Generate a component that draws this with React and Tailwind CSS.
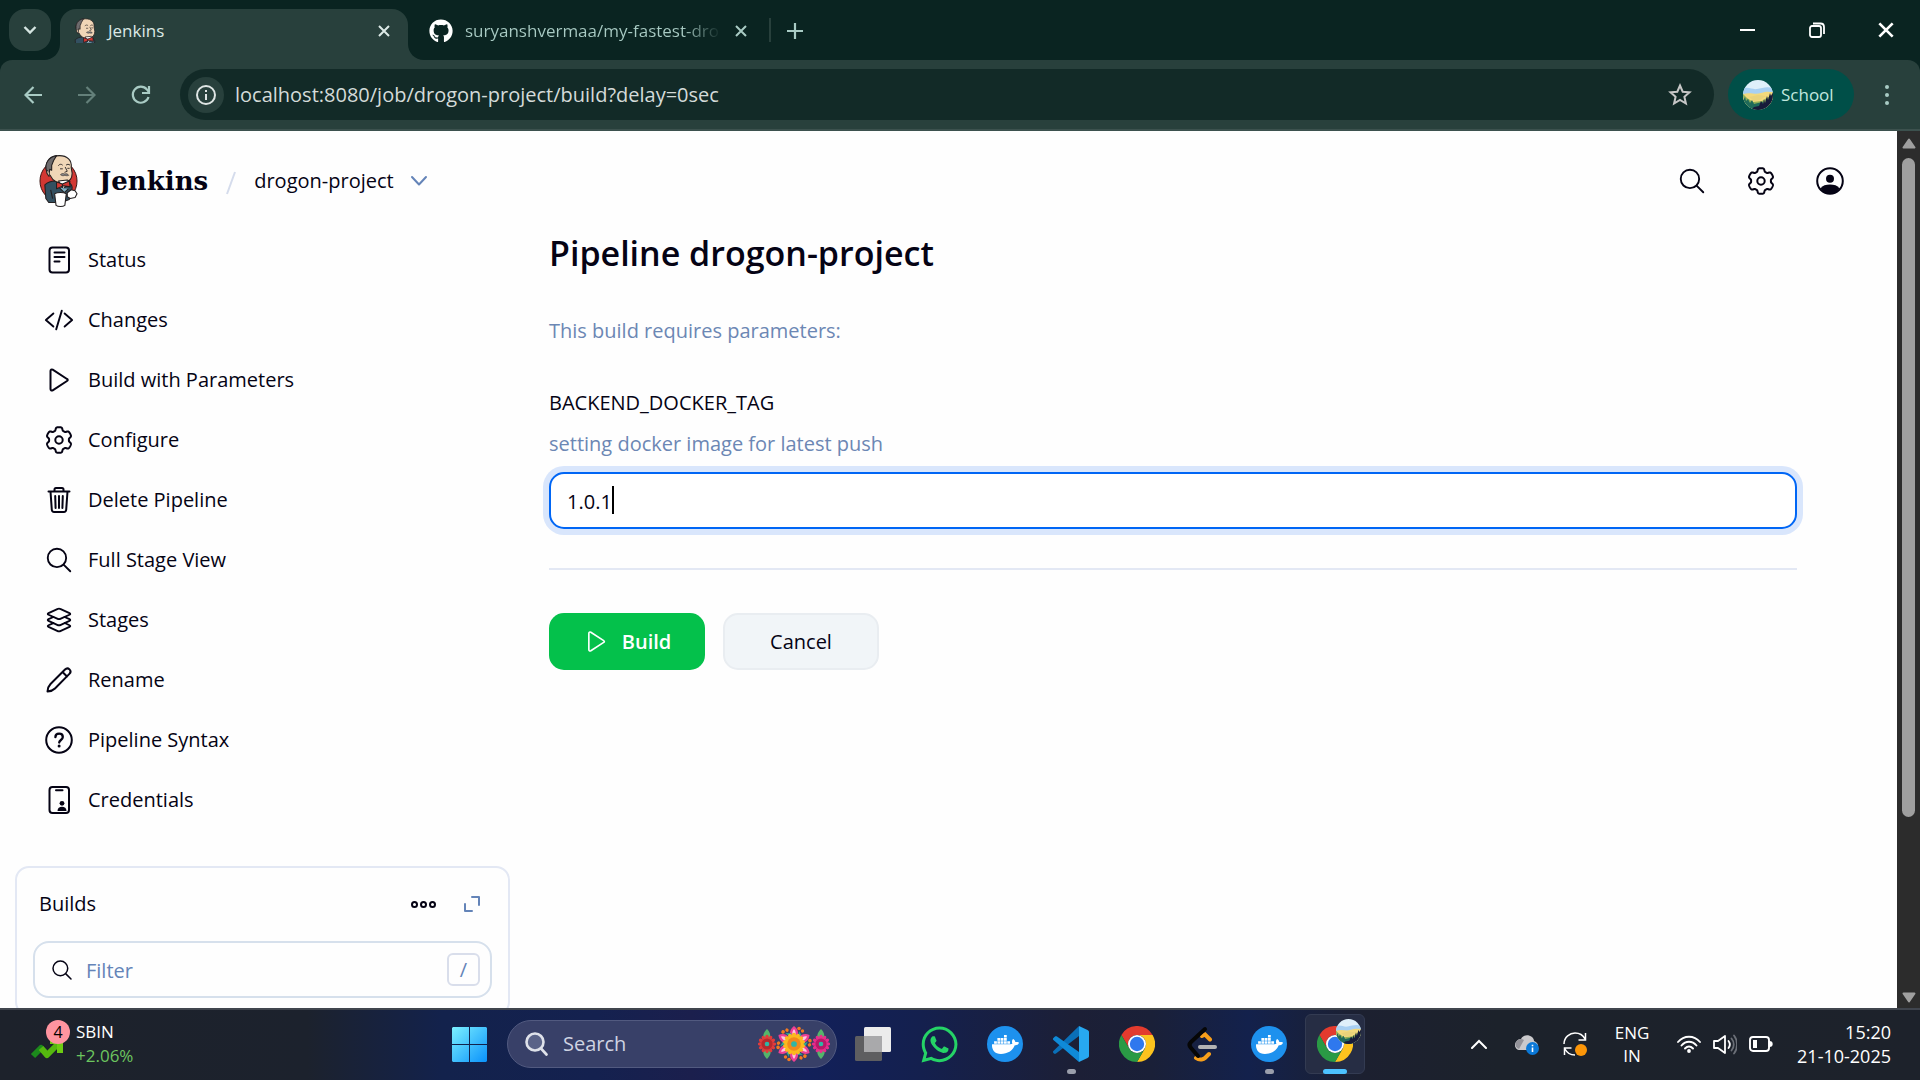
import React, { useState } from "react";
import { FaGithub, FaWhatsapp, FaDocker } from "react-icons/fa";
import { IoCodeSlashOutline, IoLayersOutline, IoSearchOutline } from "react-icons/io5";

/* ---------- Jenkins page icons ---------- */

function Line({ children, className = "size-[30px]", width = 2 }) {
  return (
    <svg
      viewBox="0 0 30 30"
      className={className}
      fill="none"
      stroke="currentColor"
      strokeWidth={width}
      strokeLinecap="round"
      strokeLinejoin="round"
      aria-hidden="true"
    >
      {children}
    </svg>
  );
}

const gearPath = (() => {
  const points = [];
  for (let i = 0; i < 180; i++) {
    const a = (i / 180) * Math.PI * 2;
    const r = 11.3 + 1.5 * Math.tanh(2.4 * (Math.cos(6 * a) + 0.25));
    points.push(`${(15 + r * Math.sin(a)).toFixed(2)} ${(15 - r * Math.cos(a)).toFixed(2)}`);
  }
  return `M${points.join("L")}Z`;
})();

const Gear = () => (
  <Line>
    <path d={gearPath} />
    <circle cx="15" cy="15" r="3.7" />
  </Line>
);
const Status = () => (
  <Line>
    <rect x="5.5" y="2.5" width="19.5" height="25" rx="3" />
    <path d="M10.5 7.5h10M10.5 12h10M10.5 16.5h5" />
  </Line>
);
const Play = ({ className, width }) => (
  <Line className={className} width={width}>
    <path d="M6.5 6v18c0 1.3 1 1.900 2.200 1.300L23 16c1-.6 1-1.500 0-2L8.700 4.700C7.500 4 6.500 4.700 6.500 6z" />
  </Line>
);
const Trash = () => (
  <Line>
    <path d="M4.500 6.500h21M10.500 6.500V4.500c0-1 .6-1.500 1.500-1.500h6c.9 0 1.500.5 1.500 1.500v2M6.500 6.500l1.300 18.300c.1 1.400 1 2.200 2.300 2.200h9.800c1.300 0 2.200-.8 2.300-2.200L23.500 6.500M11.200 11l.4 12M15 11v12M18.800 11l-.4 12" />
  </Line>
);
const Pencil = () => (
  <Line>
    <path d="M3.500 26.500c.3-3.700 1-5.500 3-7.500L21 4.500c1.400-1.400 3.300-1.300 4.500-.1s1.300 3.100-.1 4.500L11 23.500c-2 2-3.800 2.700-7.500 3zM18.500 7l4.500 4.500" />
  </Line>
);
const Help = () => (
  <Line>
    <circle cx="15" cy="15" r="12.800" />
    <path d="M11.400 12.200c0-2.100 1.500-3.500 3.700-3.500s3.700 1.400 3.700 3.300c0 3-3.600 2.900-3.600 5.600" strokeWidth="2.300" />
    <circle cx="15.100" cy="21" r="1.500" fill="currentColor" stroke="none" />
  </Line>
);
const Credentials = () => (
  <Line>
    <rect x="5.500" y="2" width="19.500" height="26" rx="3" />
    <path d="M12 5.200h6.500" />
    <circle cx="18" cy="18.300" r="2.400" fill="currentColor" stroke="none" />
    <path d="M13.500 26c0-3 2-4.200 4.500-4.200s4.500 1.200 4.500 4.200z" fill="currentColor" stroke="none" />
  </Line>
);
const Account = () => (
  <Line>
    <circle cx="15" cy="15" r="12.800" />
    <circle cx="15" cy="12.700" r="4" fill="currentColor" stroke="none" />
    <path d="M5.500 22.500c2-3 5.500-3.900 9.500-3.900s7.500.9 9.500 3.900c-2 3-5.500 5.200-9.500 5.200s-7.500-2.200-9.500-5.200z" fill="currentColor" stroke="none" />
  </Line>
);

function Butler({ className, badge }) {
  return (
    <svg viewBox="0 0 40 54" className={className} aria-hidden="true">
      {badge && <ellipse cx="20" cy="27" rx="19" ry="20.500" fill="#d33833" stroke="#3b1513" strokeWidth="1" />}
      <g stroke="#231f20" strokeWidth="1.100" strokeLinejoin="round">
        <path d="M6 31c3-3 7-4 11-4l12 1c3 1 5 3 5 6l-3 12-8 3H10L7 45z" fill="#335061" />
        <path d="M8 17C5 9 11 1 21 1c8 0 13 5 12 12l1 6c0 5-3 9-8 10-6 1-12-2-14-7z" fill="#f0d6b7" />
        <path d="M8 18C5 9 10 2 18 1l-3 5-2 5v5l-2-1-1 7z" fill="#6d6b6d" />
        <path d="M9 16c-2 1-1 5 2 6" fill="#f0d6b7" />
        <path d="M20 27l5 8 7-7-3-2z" fill="#ffffff" />
        <path d="M18 28l6 2 7-3 1 6-7-1-7 3z" fill="#d33833" />
        <path d="M24 30v3" fill="none" />
        <path d="M21 34l5 5 4-4" fill="#81b0c4" />
        <path d="M16 40c3-1.500 9-1.500 12 0l-1.500 12c-2 1.500-7 1.500-9 0z" fill="#ffffff" />
        <path d="M29 39l4-3 4 1 2 3-2 4-5 1-3-2z" fill="#ffffff" />
        <path d="M12 36l2 9" fill="none" />
      </g>
      <path d="M20 11c1-1.500 3-1.500 4-.5M28 10.500c1-1 2.500-.8 3.500 0M22 14.500h2M29.500 14h1.500M27 13l2 4-2.500 1" fill="none" stroke="#231f20" strokeWidth=".9" strokeLinecap="round" />
      <path d="M22 20.500c1.500-1.500 3-1.300 4.500-.6 1.500-.7 3-.3 4 1.300-1.500.6-2.800.4-4 0-1.500.6-3 .5-4.500-.7z" fill="#8b898b" stroke="#231f20" strokeWidth=".6" />
    </svg>
  );
}

/* ---------- Browser chrome ---------- */

const Cross = ({ size = "size-3" }) => (
  <svg viewBox="0 0 12 12" className={size} fill="none" stroke="currentColor" strokeWidth="2" aria-hidden="true">
    <path d="M1 1l10 10M11 1L1 11" />
  </svg>
);

const Landscape = ({ className }) => (
  <svg viewBox="0 0 30 30" className={className} aria-hidden="true">
    <defs>
      <clipPath id="round-photo"><circle cx="15" cy="15" r="15" /></clipPath>
    </defs>
    <g clipPath="url(#round-photo)">
      <path fill="#dff0fa" d="M0 0h30v30H0z" />
      <path fill="#a8d0f2" d="M0 9c5-3 9 1 14 0s10-3 16-1v8H0z" />
      <path fill="#f3d97c" d="M0 14c8-2 12 1 18-1s8-1 12-1v14H0z" />
      <path fill="#8fae58" d="M0 14l4 4 6 4 9-1 11-7v16H0z" />
      <path fill="#e9d27a" d="M6 17l9-2 8 1-6 4-6 1z" />
      <path fill="#1f6a5a" d="M0 21l2-4 1 4 2-2 2 4 2-3 2 4 4-1 5-1v8H0z" />
      <path fill="#171b3a" d="M30 12l-2 4-1-3-2 7-1-4-2 7-1-4-1 5-2-3-2 5-5 1-3 3h22z" />
    </g>
  </svg>
);

function TabStrip() {
  return (
    <header className="flex h-[60px] shrink-0 items-start bg-[#0a2421] pl-[9px] pt-[9px] text-[#a9cbc4]">
      <button aria-label="Search tabs" className="flex size-[42px] items-center justify-center rounded-2xl bg-[#28403c] text-[#d5e5e1]">
        <svg viewBox="0 0 14 10" className="h-[10px] w-[14px]" fill="none" stroke="currentColor" strokeWidth="2.400" aria-hidden="true">
          <path d="M1.500 2L7 7.500 12.500 2" />
        </svg>
      </button>
      <div className="relative ml-[9px] flex h-[51px] w-[348px] items-center rounded-t-2xl bg-[#28403c] pb-2 pl-[11px] pr-[18px] text-[#dce9e6]">
        <svg viewBox="0 0 16 16" className="absolute -left-4 bottom-0 size-4" aria-hidden="true"><path fill="#28403c" d="M16 0v16H0C9 16 16 9 16 0z" /></svg>
        <svg viewBox="0 0 16 16" className="absolute -right-4 bottom-0 size-4" aria-hidden="true"><path fill="#28403c" d="M0 0v16h16C7 16 0 9 0 0z" /></svg>
        <span className="h-[25px] w-7 overflow-hidden"><Butler className="h-[38px] w-7" /></span>
        <span className="ml-[9px] flex-1 text-[17px]">Jenkins</span>
        <button aria-label="Close tab"><Cross /></button>
      </div>
      <div className="flex h-[43px] w-[361px] items-center pl-[21px] pr-[22px]">
        <FaGithub className="size-6 shrink-0 text-white" />
        <span className="ml-3 w-[256px] whitespace-nowrap bg-linear-to-r from-[#a9cbc4] from-85% to-transparent bg-clip-text text-[17px] text-transparent">
          suryanshvermaa/my-fastest-dro
        </span>
        <button aria-label="Close tab" className="ml-auto"><Cross /></button>
      </div>
      <span className="mt-[9px] h-6 w-0.5 bg-[#28403c]" />
      <button aria-label="New tab" className="flex h-[43px] w-12 items-center justify-center">
        <svg viewBox="0 0 16 16" className="size-4" stroke="currentColor" strokeWidth="2.200" aria-hidden="true"><path d="M8 0v16M0 8h16" /></svg>
      </button>
      <div className="ml-auto flex h-[41px] items-center text-white">
        <button aria-label="Minimize" className="flex w-[69px] justify-center"><span className="h-0.5 w-[15px] bg-white" /></button>
        <button aria-label="Restore" className="flex w-[69px] justify-center">
          <svg viewBox="0 0 16 16" className="size-4" fill="none" stroke="currentColor" strokeWidth="1.800" aria-hidden="true">
            <rect x="1" y="4" width="11" height="11" rx="2" />
            <path d="M4 1.500h7.500c2 0 3.500 1.500 3.500 3.500v7" />
          </svg>
        </button>
        <button aria-label="Close window" className="flex w-[69px] justify-center"><Cross size="size-4" /></button>
      </div>
    </header>
  );
}

function Toolbar() {
  return (
    <div className="bg-[#0a2421]">
      <div className="flex h-[71px] items-center rounded-t-xl border-b-2 border-[#3c514e] bg-[#28403c] pl-[6px] text-[#a9cbc4]">
        <button aria-label="Back" className="flex w-[54px] justify-center">
          <svg viewBox="0 0 18 18" className="size-[18px]" fill="none" stroke="currentColor" strokeWidth="2.200" aria-hidden="true"><path d="M18 9H2M9.500 1L1.500 9l8 8" /></svg>
        </button>
        <button aria-label="Forward" className="flex w-[54px] justify-center text-[#64807a]">
          <svg viewBox="0 0 18 18" className="size-[18px]" fill="none" stroke="currentColor" strokeWidth="2.200" aria-hidden="true"><path d="M0 9h16M8.500 1l8 8-8 8" /></svg>
        </button>
        <button aria-label="Reload" className="flex w-[54px] justify-center">
          <svg viewBox="0 0 20 20" className="size-5" fill="none" stroke="currentColor" strokeWidth="2.200" aria-hidden="true">
            <path d="M17.500 12A8 8 0 1 1 16 4.600l2 2.400" />
            <path d="M18 1v7h-7" />
          </svg>
        </button>
        <div className="ml-3 flex h-[51px] flex-1 items-center rounded-full bg-[#122a27] pl-2 pr-[22px]">
          <button aria-label="View site information" className="flex size-9 items-center justify-center rounded-full bg-[#28403c] text-[#dfe5e4]">
            <svg viewBox="0 0 20 20" className="size-5" fill="none" stroke="currentColor" strokeWidth="2" aria-hidden="true">
              <circle cx="10" cy="10" r="9" /><path d="M10 9v6M10 5v2" />
            </svg>
          </button>
          <input aria-label="Address" defaultValue="localhost:8080/job/drogon-project/build?delay=0sec" className="ml-[11px] min-w-0 flex-1 bg-transparent text-[20px] text-[#d4dbd9] outline-none" />
          <button aria-label="Bookmark this tab" className="text-[#c7c7c7]">
            <svg viewBox="0 0 24 24" className="size-6" fill="none" stroke="currentColor" strokeWidth="2" aria-hidden="true">
              <path d="M12 2.500l2.700 6.200 6.800.6-5.100 4.500 1.500 6.700L12 17l-5.900 3.500 1.500-6.700-5.100-4.500 6.800-.6z" />
            </svg>
          </button>
        </div>
        <button className="ml-[14px] flex h-[51px] w-[126px] items-center gap-2 rounded-full bg-[#004f48] pl-[15px] text-[17px] text-[#c0e8df]">
          <Landscape className="size-[30px] shrink-0" />
          School
        </button>
        <button aria-label="Browser menu" className="flex w-[66px] flex-col items-center gap-1">
          <span className="size-1 rounded-full bg-current" />
          <span className="size-1 rounded-full bg-current" />
          <span className="size-1 rounded-full bg-current" />
        </button>
      </div>
    </div>
  );
}

/* ---------- Jenkins page ---------- */

const tasks = [
  { label: "Status", icon: <Status /> },
  { label: "Changes", icon: <IoCodeSlashOutline className="size-[30px]" /> },
  { label: "Build with Parameters", icon: <Play /> },
  { label: "Configure", icon: <Gear /> },
  { label: "Delete Pipeline", icon: <Trash /> },
  { label: "Full Stage View", icon: <IoSearchOutline className="size-[30px]" /> },
  { label: "Stages", icon: <IoLayersOutline className="size-[30px]" /> },
  { label: "Rename", icon: <Pencil /> },
  { label: "Pipeline Syntax", icon: <Help /> },
  { label: "Credentials", icon: <Credentials /> },
];

function PageHeader() {
  return (
    <div className="flex h-[98px] items-center pl-[39px] pr-[52px] pt-0.5">
      <a href="#home" className="flex items-center gap-[21px]">
        <Butler badge className="h-[54px] w-[39px]" />
        <span className="font-['DejaVu_Serif',serif] text-[26px] font-bold leading-9">Jenkins</span>
      </a>
      <svg viewBox="0 0 10 24" className="ml-[18px] mt-1 h-6 w-[10px]" stroke="#d5dcec" strokeWidth="2" aria-hidden="true"><path d="M9 1L1 23" /></svg>
      <a href="#project" className="ml-[18px] text-[20px]">drogon-project</a>
      <button aria-label="Project menu" className="ml-4 text-[#6484b8]">
        <svg viewBox="0 0 18 12" className="h-3 w-[18px]" fill="none" stroke="currentColor" strokeWidth="2" strokeLinecap="round" strokeLinejoin="round" aria-hidden="true"><path d="M2 2l7 7.500L16 2" /></svg>
      </button>
      <div className="ml-auto flex gap-[39px]">
        <button aria-label="Search"><IoSearchOutline className="size-[30px]" /></button>
        <button aria-label="Manage Jenkins"><Gear /></button>
        <button aria-label="Account"><Account /></button>
      </div>
    </div>
  );
}

function Sidebar() {
  return (
    <aside className="w-[510px] shrink-0 pl-[15px]">
      <nav aria-label="Project" className="pt-px">
        {tasks.map((task) => (
          <a key={task.label} href="#task" className="flex h-[60px] items-center gap-[14px] pl-[29px] text-[20px]">
            {task.icon}
            {task.label}
          </a>
        ))}
      </nav>
      <section className="mt-9 rounded-[14px] border-2 border-[#e3e8f4] px-4 pb-4 pt-[13px]">
        <div className="flex h-[46px] items-center pl-[6px] pr-3">
          <h2 className="flex-1 text-[20px]">Builds</h2>
          <button aria-label="More actions" className="flex gap-[2px]">
            <span className="size-[7px] rounded-full border-2 border-current" />
            <span className="size-[7px] rounded-full border-2 border-current" />
            <span className="size-[7px] rounded-full border-2 border-current" />
          </button>
          <button aria-label="Expand" className="ml-7 text-[#6484b8]">
            <svg viewBox="0 0 16 16" className="size-4" fill="none" stroke="currentColor" strokeWidth="2" strokeLinecap="round" strokeLinejoin="round" aria-hidden="true"><path d="M8 1h7v8M1 8v7h7" /></svg>
          </button>
        </div>
        <div className="mt-[14px] flex h-[57px] items-center rounded-2xl border-2 border-[#d6e0ec] pl-[15px] pr-[10px]">
          <IoSearchOutline className="size-6" />
          <input aria-label="Filter builds" placeholder="Filter" className="ml-3 min-w-0 flex-1 pt-0.5 text-[20px] outline-none placeholder:text-[#6484b8]" />
          <kbd className="flex size-[33px] items-center justify-center rounded-md border-2 border-[#d9deeb] font-[inherit] text-[20px] text-[#6484b8]">/</kbd>
        </div>
      </section>
    </aside>
  );
}

function BuildForm() {
  const [tag, setTag] = useState("1.0.1");
  return (
    <main className="min-w-0 flex-1 pl-[39px] pr-[100px]">
      <h1 className="text-[34px] font-semibold leading-[48px]">Pipeline drogon-project</h1>
      <p className="mt-[38px] text-[20px] leading-8 text-[#6c87b4]">This build requires parameters:</p>
      <form onSubmit={(e) => e.preventDefault()}>
        <label htmlFor="docker-tag" className="mt-10 block text-[20px] leading-8">BACKEND_DOCKER_TAG</label>
        <p className="mt-[9px] text-[20px] leading-8 text-[#6c87b4]">setting docker image for latest push</p>
        <div className="relative mt-3">
          <input
            id="docker-tag"
            value={tag}
            onChange={(e) => setTag(e.target.value)}
            className="block h-[57px] w-full rounded-[15px] border-2 border-[#0066f5] bg-white px-4 pt-0.5 text-[20px] caret-transparent shadow-[0_0_0_6px_#d9e6fc] outline-none"
          />
          <span aria-hidden="true" className="pointer-events-none absolute left-[18px] top-[14px] flex h-7 text-[20px]">
            <span className="invisible">{tag}</span>
            <span className="w-0.5 bg-black" />
          </span>
        </div>
        <hr className="mt-[39px] border-t-2 border-[#e3e8f4]" />
        <div className="mt-[43px] flex gap-[18px]">
          <button type="submit" className="flex h-[57px] w-[156px] items-center justify-center gap-3 rounded-[15px] bg-[#04c14b] text-[20px] font-semibold text-white">
            <Play className="size-[27px]" width={1.8} />
            Build
          </button>
          <button type="button" className="h-[57px] w-[156px] rounded-[15px] border-2 border-[#e9edf1] bg-[#f1f5f8] text-[20px]">Cancel</button>
        </div>
      </form>
    </main>
  );
}

function Scrollbar() {
  return (
    <div aria-hidden="true" className="flex w-[23px] shrink-0 flex-col items-center bg-[#2c2c2c] pb-[5px] pt-[7px]">
      <svg viewBox="0 0 14 11" className="h-[11px] w-[14px]"><path d="M7 1.500L12.500 9.500h-11z" fill="#9f9f9f" stroke="#9f9f9f" strokeWidth="2" strokeLinejoin="round" /></svg>
      <div className="mt-[9px] w-[13px] basis-[659px] rounded-full bg-[#9f9f9f]" />
      <svg viewBox="0 0 14 11" className="mt-auto h-[11px] w-[14px]"><path d="M7 9.500L12.500 1.500h-11z" fill="#9f9f9f" stroke="#9f9f9f" strokeWidth="2" strokeLinejoin="round" /></svg>
    </div>
  );
}

/* ---------- Taskbar ---------- */

const ChromeLogo = () => (
  <svg viewBox="0 0 36 36" className="size-9" aria-hidden="true">
    <path d="M2.400 9A18 18 0 0 1 33.600 9H18a9 9 0 0 0-7.800 13.500z" fill="#e33b2e" />
    <path d="M33.600 9A18 18 0 0 1 18 36l7.800-13.500A9 9 0 0 0 18 9z" fill="#fcc31e" />
    <path d="M18 36A18 18 0 0 1 2.400 9l7.800 13.500A9 9 0 0 0 25.800 22.500z" fill="#2a9a45" />
    <circle cx="18" cy="18" r="9" fill="#fff" />
    <circle cx="18" cy="18" r="7.200" fill="#2f78ee" />
  </svg>
);
const DockerLogo = () => (
  <span className="flex size-9 items-center justify-center rounded-full bg-[#1d91ee]"><FaDocker className="size-[27px] text-white" /></span>
);
const CodeLogo = () => (
  <svg viewBox="0 0 36 36" className="size-9" aria-hidden="true">
    <path d="M26 0v10L3 27.500c-.8.600-1.500.500-2 0L.4 27c-.6-.6-.6-1.500 0-2.100z" fill="#0a6fb8" />
    <path d="M.4 12.100l1.600-1.500c.6-.5 1.300-.6 2 0L26 26v10L.4 14.100c-.6-.6-.6-1.400 0-2z" fill="#0f8ad8" />
    <path d="M26 0l8.500 4c1 .5 1.500 1.200 1.500 2.200v23.600c0 1-.5 1.700-1.500 2.200L26 36z" fill="#27a8f0" />
  </svg>
);
const LeetLogo = () => (
  <svg viewBox="0 0 36 36" className="size-9" fill="none" strokeWidth="4" strokeLinecap="round" aria-hidden="true">
    <path d="M17 10l3-1.500 5 5M11 32c4 3 8 1 9 0l4-4" stroke="#f89f1b" />
    <path d="M20 3L6 16c-2 2-2 4 0 6l7 8" stroke="#060606" strokeLinejoin="round" />
    <path d="M15 21h15" stroke="#b3b3b3" />
  </svg>
);

function Flower({ cx, cy, r, petals, color, core }) {
  return (
    <g>
      {Array.from({ length: petals }, (_, i) => (
        <ellipse key={i} cx={cx} cy={cy - r * 0.68} rx={r * 0.2} ry={r * 0.34} fill={color} transform={`rotate(${(i * 360) / petals} ${cx} ${cy})`} />
      ))}
      <circle cx={cx} cy={cy} r={r * 0.62} fill={core} />
      <circle cx={cx} cy={cy} r={r * 0.26} fill="#2fb5a5" />
    </g>
  );
}

const Flowers = () => (
  <svg viewBox="0 0 72 36" className="h-9 w-[72px]" aria-hidden="true">
    {[9, 63].map((x) => (
      <path key={x} d={`M${x} 3c4 4 4 8 2 12v6c3 4 2 8-2 12-4-4-5-8-2-12v-6c-3-4-2-8 2-12z`} fill="#55b56a" />
    ))}
    {Array.from({ length: 6 }, (_, i) => (
      <g key={i} transform={`rotate(${i * 60} 36 18)`}>
        <path d="M36 0c4 3 5 7 3 11h-6c-2-4-1-8 3-11z" fill="#ee3f94" />
        <path d="M36 3c2 2 2 5 1 7h-2c-1-2-1-5 1-7z" fill="#fbc7df" />
        <circle cx="41" cy="2.500" r="1.800" fill="#f5791f" />
        <circle cx="44.500" cy="5" r="1.700" fill="#f5791f" />
        <path d="M41 5l3 5-4 3z" fill="#2ba895" />
      </g>
    ))}
    <Flower cx={36} cy={18} r={11} petals={14} color="#fbb91e" core="#f0891c" />
    <Flower cx={9} cy={18} r={9} petals={12} color="#e23b3b" core="#b52a2e" />
    <Flower cx={63} cy={18} r={9} petals={12} color="#ea2b8c" core="#b71867" />
  </svg>
);

function AppButton({ label, children, running, active }) {
  return (
    <button
      aria-label={label}
      className={`relative flex size-[60px] items-center justify-center rounded-md ${active ? "border border-[#333b52] bg-[#262d44]" : ""}`}
    >
      {children}
      {running && <span className="absolute bottom-0 h-[5px] w-[9px] rounded-full bg-[#9a9eab]" />}
      {active && <span className="absolute -bottom-px h-[5px] w-6 rounded-full bg-[#4cc2ff]" />}
    </button>
  );
}

function Taskbar() {
  return (
    <footer className="flex h-[72px] shrink-0 items-center border-t-2 border-[#40454e] bg-[linear-gradient(90deg,#1d222b_0%,#1c222d_16%,#13224c_23%,#14214f_31%,#1b1f4d_36%,#12205a_42%,#14204e_48%,#1c1f36_56%,#1a2038_60%,#13214c_65%,#1c2030_71%,#1c222b_78%,#1d222b_100%)] pb-0.5 text-white">
      <button className="flex w-[439px] items-center pl-[30px] text-left">
        <span className="relative flex h-12 w-[46px] items-center">
          <svg viewBox="0 0 36 24" className="mt-2 h-6 w-9" fill="none" strokeWidth="6" aria-hidden="true">
            <path d="M3 20l8-8 4 4" stroke="#1c8a1c" strokeLinejoin="round" />
            <path d="M11 12l6 7L29 7" stroke="#55b80f" strokeLinejoin="round" />
            <path d="M20 5h10v12" stroke="#6dcc12" strokeLinejoin="round" />
          </svg>
          <span className="absolute left-4 top-0 flex size-6 items-center justify-center rounded-full bg-[#ff949f] text-[16px] text-black">4</span>
        </span>
        <span className="text-[17px] leading-6">
          <span className="block">SBIN</span>
          <span className="block text-[#6cc65f]">+2.06%</span>
        </span>
      </button>
      <AppButton label="Start">
        <svg viewBox="0 0 35 35" className="size-[35px]" aria-hidden="true">
          <defs>
            <linearGradient id="start" x1="0" y1="0" x2="1" y2="1"><stop stopColor="#7cf0ff" /><stop offset="1" stopColor="#0a92fb" /></linearGradient>
          </defs>
          <path d="M1 0h16v17H0V1zM18 0h16l1 1v16H18zM0 18h17v17H1l-1-1zM18 18h17v16l-1 1H18z" fill="url(#start)" />
        </svg>
      </AppButton>
      <div className="ml-2 flex items-center gap-1.5">
        <label className="flex h-12 w-[330px] items-center rounded-full border border-[#525a80] bg-[#384068] pl-4 pr-[6px]">
          <svg viewBox="0 0 24 24" className="size-6" fill="none" stroke="#dfe2ea" strokeWidth="2.600" strokeLinecap="round" aria-hidden="true">
            <circle cx="11" cy="10" r="8.500" fill="#5a6388" /><path d="M17 16.500l5.500 6" />
          </svg>
          <input aria-label="Search" placeholder="Search" className="ml-[15px] min-w-0 flex-1 bg-transparent text-[20px] outline-none placeholder:text-[#cfd3e2]" />
          <Flowers />
        </label>
        <AppButton label="Task view">
          <svg viewBox="0 0 36 34" className="h-[34px] w-9" aria-hidden="true">
            <rect x="9" width="27" height="25" rx="1.500" fill="#ececec" />
            <rect y="9" width="27" height="25" rx="1.500" fill="#5e5e60" />
            <path d="M9 9h18v16H9z" fill="#a9a9ab" />
          </svg>
        </AppButton>
        <AppButton label="WhatsApp"><FaWhatsapp className="size-[41px] text-[#25d366]" /></AppButton>
        <AppButton label="Docker"><DockerLogo /></AppButton>
        <AppButton label="Visual Studio Code" running><CodeLogo /></AppButton>
        <AppButton label="Chrome"><ChromeLogo /></AppButton>
        <AppButton label="LeetCode"><LeetLogo /></AppButton>
        <AppButton label="Docker Desktop" running><DockerLogo /></AppButton>
        <AppButton label="Chrome, School" active>
          <ChromeLogo />
          <Landscape className="absolute right-[3px] top-1 size-[25px]" />
        </AppButton>
      </div>
      <div className="ml-auto flex items-center pr-[29px]">
        <button aria-label="Show hidden icons" className="flex w-12 justify-center">
          <svg viewBox="0 0 16 10" className="h-[10px] w-4" fill="none" stroke="currentColor" strokeWidth="2" strokeLinecap="round" aria-hidden="true"><path d="M1 9l7-7 7 7" /></svg>
        </button>
        <button aria-label="OneDrive" className="flex w-12 justify-center">
          <svg viewBox="0 0 24 24" className="size-6" aria-hidden="true">
            <path d="M4 18a5 5 0 0 1-3-8c1-2 3-3 5-3 2-4 7-5 11-2 1 1 2 2 2 4 3 1 4 3 4 5 0 3-2 4-4 4z" fill="#c9c9cc" />
            <path d="M1 10c2-3 5-4 8-2L4 17a5 5 0 0 1-3-7z" fill="#929299" />
            <circle cx="17.500" cy="16.500" r="6.500" fill="#0a78d7" />
            <path d="M17.500 15.500v4.500M17.500 12.800v1.500" stroke="#fff" strokeWidth="1.600" />
          </svg>
        </button>
        <button aria-label="Windows Update" className="flex w-12 justify-center">
          <svg viewBox="0 0 24 24" className="size-6" fill="none" stroke="currentColor" strokeWidth="1.500" aria-hidden="true">
            <path d="M1 12C1 5 7 1 12 1c4 0 8 2 10 6M22.500 1v7h-7M12 23c-4 0-8-2-10-6M1.500 23v-7h7" />
            <circle cx="18" cy="18" r="6" fill="#fc9608" stroke="none" />
          </svg>
        </button>
        <button className="w-[66px] text-center text-[17px] leading-[23px]">ENG<br />IN</button>
        <button aria-label="Network, volume and battery" className="flex w-[120px] items-center justify-center gap-3">
          <svg viewBox="0 0 24 24" className="size-6" fill="none" stroke="currentColor" strokeWidth="1.900" strokeLinecap="round" aria-hidden="true">
            <path d="M1 10c6-7 16-7 22 0M4.500 13.500c4.300-5 10.700-5 15 0M8 16.500c2.500-2.600 5.500-2.600 8 0" />
            <circle cx="12" cy="19" r="1.900" fill="currentColor" stroke="none" />
          </svg>
          <svg viewBox="0 0 24 24" className="size-6" fill="none" stroke="currentColor" strokeWidth="1.800" strokeLinecap="round" strokeLinejoin="round" aria-hidden="true">
            <path d="M1 9v7h4l7 5V4L5 9zM15.500 9c1.500 2 1.500 5 0 7" />
            <path d="M18.500 6.500c3 3.500 3 8.500 0 12M21 3.500c4 5 4 13 0 18" stroke="#6b6f77" />
          </svg>
          <svg viewBox="0 0 24 24" className="size-6" fill="none" stroke="currentColor" strokeWidth="1.900" aria-hidden="true">
            <rect x="1" y="5" width="19" height="14" rx="3" />
            <path d="M4 8h4v8H4z" fill="currentColor" stroke="none" />
            <path d="M20.500 10c3 0 3 4 0 4z" fill="currentColor" />
          </svg>
        </button>
        <button className="w-[106px] text-right text-[18px] leading-6">
          <span className="block">15:20</span>
          <span className="block">21-10-2025</span>
        </button>
      </div>
    </footer>
  );
}

export default function App() {
  return (
    <div className="flex h-screen flex-col overflow-hidden font-['Open_Sans',sans-serif]">
      <TabStrip />
      <Toolbar />
      <div className="flex min-h-0 flex-1">
        <div className="min-w-0 flex-1 overflow-hidden bg-[#fefefe] text-[#050314]">
          <PageHeader />
          <div className="flex">
            <Sidebar />
            <BuildForm />
          </div>
        </div>
        <Scrollbar />
      </div>
      <Taskbar />
    </div>
  );
}
